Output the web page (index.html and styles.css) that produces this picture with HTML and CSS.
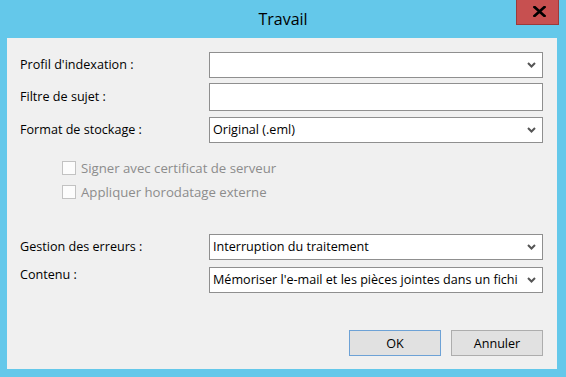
FILE: index.html
```html
<!DOCTYPE html>
<html lang="fr">
<head>
<meta charset="utf-8">
<title>Travail</title>
<link rel="stylesheet" href="styles.css">
</head>
<body>
<div class="window">
  <div class="titlebar">
    <div class="spacer"></div>
    <div class="title">Travail</div>
    <div class="caption">
      <button class="close" aria-label="Fermer">
        <svg width="13" height="11" viewBox="0 0 13 11"><path d="M1.5 1 L11.5 10 M11.5 1 L1.5 10" stroke="#000" stroke-width="2.6" stroke-linecap="square" fill="none"/></svg>
      </button>
    </div>
  </div>
  <div class="client">
    <div class="row r1">
      <div class="label">Profil d'indexation :</div>
      <div class="combo"><span class="value"></span><svg class="chev" width="9" height="6" viewBox="0 0 9 6"><path d="M1 1 L4.5 4.5 L8 1" stroke="#555" stroke-width="2" fill="none"/></svg></div>
    </div>
    <div class="row r2">
      <div class="label">Filtre de sujet :</div>
      <div class="textbox"></div>
    </div>
    <div class="row r3">
      <div class="label">Format de stockage :</div>
      <div class="combo"><span class="value">Original (.eml)</span><svg class="chev" width="9" height="6" viewBox="0 0 9 6"><path d="M1 1 L4.5 4.5 L8 1" stroke="#555" stroke-width="2" fill="none"/></svg></div>
    </div>
    <div class="checks">
      <div class="check"><span class="box"></span><span class="ctext">Signer avec certificat de serveur</span></div>
      <div class="check c2"><span class="box"></span><span class="ctext">Appliquer horodatage externe</span></div>
    </div>
    <div class="row r4">
      <div class="label">Gestion des erreurs :</div>
      <div class="combo"><span class="value">Interruption du traitement</span><svg class="chev" width="9" height="6" viewBox="0 0 9 6"><path d="M1 1 L4.5 4.5 L8 1" stroke="#555" stroke-width="2" fill="none"/></svg></div>
    </div>
    <div class="row r5">
      <div class="label top">Contenu :</div>
      <div class="combo"><span class="value">Mémoriser l'e-mail et les pièces jointes dans un fichi</span><svg class="chev" width="9" height="6" viewBox="0 0 9 6"><path d="M1 1 L4.5 4.5 L8 1" stroke="#555" stroke-width="2" fill="none"/></svg></div>
    </div>
    <div class="buttons">
      <button class="btn default">OK</button>
      <button class="btn">Annuler</button>
    </div>
  </div>
</div>
</body>
</html>
```
FILE: styles.css
```css
html, body {
  margin: 0;
  padding: 0;
}
body {
  width: 566px;
  height: 377px;
  background: #64c8ea;
  font-family: "Open Sans", "Noto Sans", sans-serif;
  font-size: 12.6px;
  color: #000;
  overflow: hidden;
}
.window {
  width: 566px;
  height: 377px;
  display: flex;
  flex-direction: column;
}
.titlebar {
  height: 38px;
  flex: 0 0 38px;
  display: grid;
  grid-template-columns: 1fr auto 1fr;
}
.title {
  font-size: 16px;
  line-height: 20px;
  padding-top: 9px;
  color: #000;
}
.caption {
  display: flex;
  justify-content: flex-end;
  align-items: flex-start;
  padding-right: 7px;
}
.close {
  width: 43px;
  height: 25px;
  margin: 0;
  padding: 0;
  border: 1px solid #9c3a3a;
  border-top: none;
  background: #c75050;
  display: flex;
  align-items: center;
  justify-content: center;
  padding-bottom: 2px;
  padding-left: 3px;
}
.close svg { display: block; }
.client {
  flex: 1;
  margin: 0 9px 8px 7px;
  background: #f0f0f0;
  padding: 14px 14px 0 13px;
  display: flex;
  flex-direction: column;
}
.row {
  display: flex;
  align-items: center;
}
.label {
  width: 189px;
  flex: 0 0 189px;
  line-height: 16px;
  white-space: nowrap;
}
.label.top {
  align-self: flex-start;
  padding-top: 0;
}
.r2 { margin-top: 5px; }
.r3 { margin-top: 6px; }
.r4 { margin-top: 35px; }
.r5 { margin-top: 7px; }
.combo, .textbox {
  flex: 1;
  box-sizing: border-box;
  height: 26px;
  border: 1px solid #8f8f8f;
  background: #fff;
  display: flex;
  align-items: center;
  padding: 0 6px 0 3px;
}
.textbox { height: 28px; }
.combo .value {
  flex: 1;
  white-space: nowrap;
  overflow: hidden;
  line-height: 16px;
}
.chev { display: block; flex: 0 0 9px; }
.checks {
  margin-top: 17px;
  padding-left: 42px;
  display: flex;
  flex-direction: column;
}
.check {
  display: flex;
  align-items: center;
  height: 15px;
  color: #8c8c8c;
}
.check.c2 { margin-top: 9px; }
.box {
  width: 14px;
  height: 14px;
  box-sizing: border-box;
  border: 1px solid #c2c2c2;
  background: #fcfcfc;
  margin-right: 5px;
}
.ctext { line-height: 16px; font-size: 13.2px; }
.buttons {
  margin-top: 37px;
  display: flex;
  justify-content: flex-end;
  gap: 10px;
}
.btn {
  width: 92px;
  height: 26px;
  box-sizing: border-box;
  border: 1px solid #adadad;
  background: #e1e1e1;
  font-family: inherit;
  font-size: 12.6px;
  color: #000;
  padding: 0;
  margin: 0;
}
.btn.default {
  border-color: #6da2d6;
}
```
